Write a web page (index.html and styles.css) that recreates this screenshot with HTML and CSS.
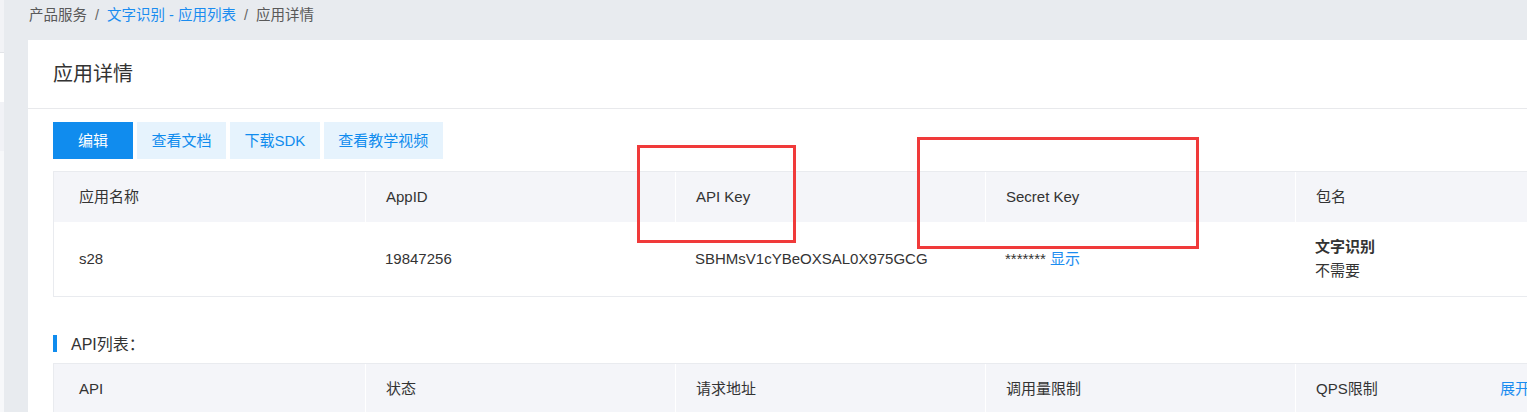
FILE: index.html
```html
<!DOCTYPE html>
<html lang="zh-CN">
<head>
<meta charset="utf-8">
<title>应用详情</title>
<link rel="stylesheet" href="styles.css">
</head>
<body>
<div class="page">
  <aside class="side">
    <div class="side-top"></div>
    <div class="side-item"></div>
    <div class="side-item alt"></div>
  </aside>
  <main class="main">
    <nav class="crumbs">
      <span class="crumb">产品服务</span><span class="sep">/</span><a class="crumb link">文字识别 - 应用列表</a><span class="sep">/</span><span class="crumb">应用详情</span>
    </nav>
    <section class="card">
      <header class="card-head">应用详情</header>
      <div class="card-body">
        <div class="actions">
          <button class="btn primary">编辑</button>
          <button class="btn">查看文档</button>
          <button class="btn">下载SDK</button>
          <button class="btn">查看教学视频</button>
        </div>
        <table class="grid grid-info">
          <thead>
            <tr><th class="w1">应用名称</th><th class="w2">AppID</th><th class="w2">API Key</th><th class="w2">Secret Key</th><th class="w2">包名</th></tr>
          </thead>
          <tbody>
            <tr class="data">
              <td>s28</td>
              <td>19847256</td>
              <td>SBHMsV1cYBeOXSAL0X975GCG</td>
              <td>******* <a class="link">显示</a></td>
              <td><div class="pkg-name">文字识别</div><div class="pkg-val">不需要</div></td>
            </tr>
          </tbody>
        </table>
        <h3 class="section-title"><span class="bar"></span>API列表：</h3>
        <table class="grid grid-api">
          <thead>
            <tr><th class="w1">API</th><th class="w2">状态</th><th class="w2">请求地址</th><th class="w2">调用量限制</th><th class="w5">QPS限制</th><th class="op"><a class="link">展开</a></th></tr>
          </thead>
        </table>
      </div>
    </section>
  </main>
  <div class="mark mark-api"></div>
  <div class="mark mark-secret"></div>
</div>
</body>
</html>
```

FILE: styles.css
```css
html, body {
  margin: 0;
  padding: 0;
  overflow: hidden;
}
body {
  background: #e8ebef;
  font-family: "Liberation Sans", "Noto Sans CJK SC", sans-serif;
  color: #333;
  font-size: 15px;
}
.page {
  position: relative;
  display: flex;
  height: 412px;
  overflow: hidden;
}
.side {
  width: 4px;
  flex: none;
  background: #f7f8fa;
  display: flex;
  flex-direction: column;
}
.side-top {
  height: 52px;
  background: #f2f3f6;
  border-bottom: 1px solid #e2e4e8;
}
.side-item {
  height: 49px;
  background: #fff;
}
.side-item.alt {
  background: #f1f2f6;
}
.main {
  flex: 1;
  min-width: 0;
  padding-left: 24px;
}
.crumbs {
  height: 40px;
  line-height: 30px;
  padding-left: 1px;
  color: #595959;
  font-size: 14.5px;
  white-space: nowrap;
}
.sep {
  margin: 0 8px;
  color: #666;
}
.link {
  color: #1a8cf0;
  text-decoration: none;
  cursor: pointer;
}
.card {
  background: #fff;
  height: 372px;
  overflow: hidden;
}
.card-head {
  height: 68px;
  line-height: 68px;
  padding-left: 25px;
  font-size: 20px;
  color: #333;
  border-bottom: 1px solid #e8e9ec;
}
.card-body {
  padding: 13px 0 0 25px;
}
.actions {
  display: flex;
  gap: 4px;
}
.btn {
  height: 37px;
  min-width: 80px;
  padding: 0 14.5px;
  border: 0;
  border-radius: 0;
  background: #e6f3fd;
  color: #108cee;
  font-family: inherit;
  font-size: 15px;
  line-height: 37px;
  cursor: pointer;
}
.btn.primary {
  background: #108cee;
  color: #fff;
}
.grid {
  margin-top: 12px;
  table-layout: fixed;
  border-collapse: separate;
  border-spacing: 0;
  border: 1px solid #e9ebef;
  border-right: 0;
  line-height: 18px;
}
.grid-info {
  width: 1552px;
}
.grid-api {
  width: 1600px;
}
.grid th,
.grid td {
  box-sizing: border-box;
}
.w1 { width: 311px; }
.w2 { width: 310px; }
.w5 { width: 185px; }
.grid th {
  height: 50px;
  padding: 0 0 1px 20px;
  background: #f4f5f9;
  font-weight: normal;
  text-align: left;
  color: #333;
  border-left: 1px solid #fff;
}
.grid th:first-child {
  padding-left: 25px;
  border-left: 0;
}
.grid th.op {
  border-left: 0;
}
.grid td {
  height: 74px;
  padding: 0 0 0 20px;
  vertical-align: middle;
  color: #333;
}
.grid td:first-child {
  padding-left: 25px;
}
.pkg-name {
  font-weight: bold;
  line-height: 24px;
}
.pkg-val {
  line-height: 24px;
}
.section-title {
  display: flex;
  align-items: center;
  gap: 14px;
  height: 20px;
  margin: 36px 0 0;
  font-size: 16px;
  font-weight: normal;
  color: #333;
}
.section-title + .grid {
  margin-top: 10px;
}
.bar {
  width: 4px;
  height: 17px;
  background: #108cee;
}
.mark {
  position: absolute;
  border: 3px solid #f03a3a;
  box-sizing: border-box;
}
.mark-api {
  left: 637px;
  top: 145px;
  width: 159px;
  height: 98px;
}
.mark-secret {
  left: 917px;
  top: 137px;
  width: 282px;
  height: 112px;
}
```
